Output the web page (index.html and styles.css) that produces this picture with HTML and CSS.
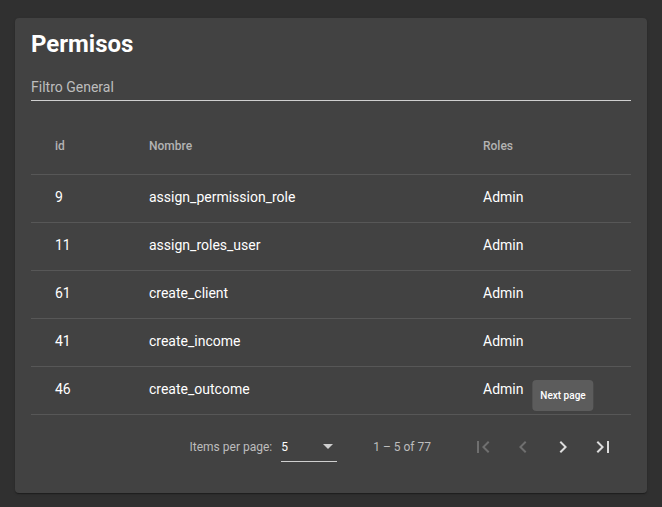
FILE: index.html
```html
<!DOCTYPE html>
<html lang="es">
<head>
<meta charset="utf-8">
<title>Permisos</title>
<link rel="stylesheet" href="styles.css">
</head>
<body>
<div class="card">
  <h1 class="title">Permisos</h1>
  <div class="filter">
    <span class="filter-label">Filtro General</span>
  </div>
  <table class="table">
    <colgroup>
      <col class="c-id">
      <col class="c-name">
      <col class="c-roles">
    </colgroup>
    <thead>
      <tr><th>id</th><th>Nombre</th><th>Roles</th></tr>
    </thead>
    <tbody>
      <tr><td>9</td><td>assign_permission_role</td><td>Admin</td></tr>
      <tr><td>11</td><td>assign_roles_user</td><td>Admin</td></tr>
      <tr><td>61</td><td>create_client</td><td>Admin</td></tr>
      <tr><td>41</td><td>create_income</td><td>Admin</td></tr>
      <tr><td>46</td><td>create_outcome</td><td>Admin</td></tr>
    </tbody>
  </table>
  <div class="paginator">
    <span class="page-size-label">Items per page:</span>
    <div class="select">
      <span class="select-value">5</span>
      <span class="select-arrow"></span>
    </div>
    <span class="range">1 – 5 of 77</span>
    <div class="nav">
      <button class="nav-btn disabled" aria-label="First page">
        <svg viewBox="0 0 24 24" width="24" height="24"><path d="M18.41 16.59L13.82 12l4.59-4.59L17 6l-6 6 6 6zM6 6h2v12H6z"/></svg>
      </button>
      <button class="nav-btn disabled" aria-label="Previous page">
        <svg viewBox="0 0 24 24" width="24" height="24"><path d="M15.41 7.41L14 6l-6 6 6 6 1.41-1.41L10.83 12z"/></svg>
      </button>
      <button class="nav-btn" aria-label="Next page">
        <svg viewBox="0 0 24 24" width="24" height="24"><path d="M10 6L8.59 7.41 13.17 12l-4.58 4.59L10 18l6-6z"/></svg>
        <span class="tooltip">Next page</span>
      </button>
      <button class="nav-btn" aria-label="Last page">
        <svg viewBox="0 0 24 24" width="24" height="24"><path d="M5.59 7.41L10.18 12l-4.59 4.59L7 18l6-6-6-6zM16 6h2v12h-2z"/></svg>
      </button>
    </div>
  </div>
</div>
</body>
</html>
```

FILE: styles.css
```css
* { box-sizing: border-box; }

body {
  margin: 0;
  padding: 18px 15px 14px;
  background: #303030;
  font-family: Roboto, "Noto Sans", "Liberation Sans", sans-serif;
  color: #fff;
}

.card {
  background: #424242;
  border-radius: 4px;
  padding: 10px 16px 14px;
  box-shadow: 0 2px 1px -1px rgba(0,0,0,.2), 0 1px 1px 0 rgba(0,0,0,.14), 0 1px 3px 0 rgba(0,0,0,.12);
}

.title {
  margin: 0;
  font-size: 24px;
  line-height: 32px;
  font-weight: 700;
  color: #fff;
}

.filter {
  margin-top: 17px;
  padding-bottom: 3px;
  border-bottom: 1px solid #cfcfcf;
  line-height: 20px;
  height: 24px;
}

.filter-label {
  font-size: 14px;
  color: #bdbdbd;
}

.table {
  width: 100%;
  margin-top: 17px;
  border-collapse: collapse;
  table-layout: fixed;
}

.c-id { width: 118px; }
.c-name { width: 334px; }

.table th,
.table td {
  text-align: left;
  border-bottom: 1px solid #575757;
}

.table th { padding: 0; }
.table td { padding: 0 0 2px; }

.table th:first-child,
.table td:first-child { padding-left: 24px; }

.table th {
  height: 56px;
  font-size: 12px;
  font-weight: 500;
  color: #b3b3b3;
}

.table td {
  height: 48px;
  font-size: 14px;
  color: #fff;
}

.paginator {
  display: flex;
  align-items: center;
  justify-content: flex-end;
  height: 64px;
  padding-right: 8px;
  font-size: 12px;
  color: #bdbdbd;
}

.page-size-label { margin-right: 9px; }

.select {
  position: relative;
  width: 56px;
  height: 24px;
  margin-top: 6px;
  border-bottom: 1px solid #cfcfcf;
  display: flex;
  align-items: center;
}

.select-value {
  color: #fff;
  font-size: 12px;
  margin-top: -4px;
}

.select-arrow {
  position: absolute;
  right: 4px;
  top: 6px;
  width: 0;
  height: 0;
  border-left: 5px solid transparent;
  border-right: 5px solid transparent;
  border-top: 5px solid #cfcfcf;
}

.range {
  margin-left: 36px;
  margin-right: 32px;
}

.nav { display: flex; }

.nav-btn {
  position: relative;
  width: 40px;
  height: 40px;
  padding: 0;
  border: 0;
  background: transparent;
  display: flex;
  align-items: center;
  justify-content: center;
  fill: #dcdcdc;
}

.nav-btn.disabled { fill: #6f6f6f; }

.tooltip {
  position: absolute;
  left: 50%;
  bottom: 56px;
  transform: translateX(-50%);
  height: 31px;
  line-height: 31px;
  padding: 0 8px;
  border-radius: 4px;
  background: #5c5c5c;
  color: #fff;
  font-family: Roboto, "Noto Sans", sans-serif;
  font-size: 10px;
  font-weight: 500;
  white-space: nowrap;
}
```
